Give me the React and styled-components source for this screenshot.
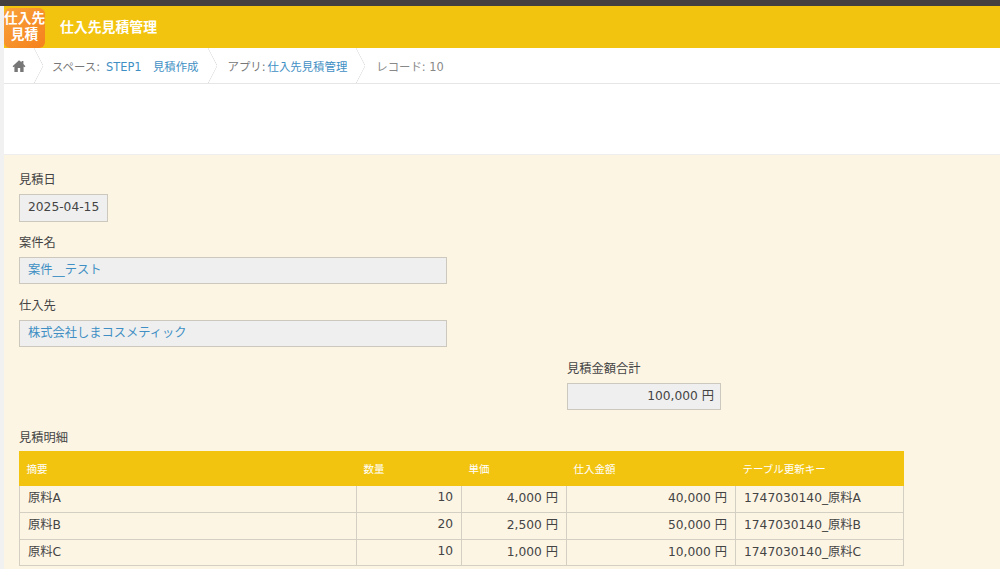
import React from 'react';
import styled, { createGlobalStyle } from 'styled-components';

const rows = [
  { name: '原料A', qty: '10', price: '4,000 円', total: '40,000 円', key: '1747030140_原料A' },
  { name: '原料B', qty: '20', price: '2,500 円', total: '50,000 円', key: '1747030140_原料B' },
  { name: '原料C', qty: '10', price: '1,000 円', total: '10,000 円', key: '1747030140_原料C' },
];

const App = () => {
  return (
    <Page>
      <GlobalStyle />
      <TopBar />
      <Content>
        <Header>
          <AppIcon>
            仕入先
            <br />
            見積
          </AppIcon>
          <AppTitle>仕入先見積管理</AppTitle>
        </Header>
        <Breadcrumb>
          <Crumb $first>
            <svg width="14" height="14" viewBox="0 0 14 14" fill="#777">
              <path d="M7 1.2 0.6 7.2l.9 1L2.4 7.5V13h3.4V9h2.4v4h3.4V7.5l.9.7.9-1L11.4 5V2h-1.8v1.3z" />
            </svg>
          </Crumb>
          <Crumb $gap={6}>
            スペース: <CrumbLink>STEP1　見積作成</CrumbLink>
          </Crumb>
          <Crumb $gap={2}>
            アプリ: <CrumbLink>仕入先見積管理</CrumbLink>
          </Crumb>
          <Crumb $last>レコード: 10</Crumb>
        </Breadcrumb>
        <Toolbar />
        <Form>
          <Field>
            <Label>見積日</Label>
            <Value $width={89} $tall>2025-04-15</Value>
          </Field>
          <Field>
            <Label>案件名</Label>
            <Value $width={428} $link>
              案件__テスト
            </Value>
          </Field>
          <Field>
            <Label>仕入先</Label>
            <Value $width={428} $link>
              株式会社しまコスメティック
            </Value>
          </Field>
          <Field $indent={548}>
            <Label>見積金額合計</Label>
            <Value $width={154} $right>
              100,000 円
            </Value>
          </Field>
          <TableField>
            <Label>見積明細</Label>
            <Table>
              <colgroup>
                <col width="337" />
                <col width="105" />
                <col width="105" />
                <col width="169" />
                <col width="168" />
              </colgroup>
              <thead>
                <tr>
                  <Th>摘要</Th>
                  <Th>数量</Th>
                  <Th>単価</Th>
                  <Th>仕入金額</Th>
                  <Th>テーブル更新キー</Th>
                </tr>
              </thead>
              <tbody>
                {rows.map((row) => (
                  <Row key={row.key}>
                    <Td>{row.name}</Td>
                    <Td $right>{row.qty}</Td>
                    <Td $right>{row.price}</Td>
                    <Td $right>{row.total}</Td>
                    <Td>{row.key}</Td>
                  </Row>
                ))}
              </tbody>
            </Table>
          </TableField>
        </Form>
      </Content>
    </Page>
  );
};

const GlobalStyle = createGlobalStyle`
  html, body {
    margin: 0;
    height: 100%;
    overflow: hidden;
    background: #f1f1f1;
    font-family: "DejaVu Sans", "Noto Sans CJK JP", sans-serif;
    font-size: 12.25px;
    color: #444;
  }
`;

const Page = styled.div`
  display: flex;
  flex-direction: column;
  height: 569px;
  overflow: hidden;
`;

const TopBar = styled.div`
  flex: none;
  height: 6px;
  background: #444040;
`;

const Content = styled.div`
  flex: 1;
  display: flex;
  flex-direction: column;
  min-height: 0;
  margin-left: 4px;
`;

const Header = styled.header`
  flex: none;
  display: flex;
  align-items: flex-end;
  height: 42px;
  background: #f2c40f;
`;

const AppIcon = styled.div`
  width: 41px;
  height: 40px;
  border-radius: 6px;
  background: linear-gradient(135deg, #f9a23a, #f5811d);
  color: #fff;
  font-size: 13.7px;
  font-weight: 700;
  line-height: 16px;
  text-align: center;
  white-space: nowrap;
  padding-top: 2px;
  box-sizing: border-box;
`;

const AppTitle = styled.div`
  margin: 0 0 12px 15px;
  color: #fff;
  font-size: 13.86px;
  font-weight: 700;
  line-height: 18px;
`;

const Breadcrumb = styled.nav`
  flex: none;
  display: flex;
  height: 35px;
  border-bottom: 1px solid #e6e6e6;
  background: #fff;
`;

const Crumb = styled.div`
  position: relative;
  display: flex;
  align-items: center;
  gap: ${(p) => p.$gap || 0}px;
  height: 35px;
  width: ${(p) => (p.$first ? '37px' : 'auto')};
  padding: 0 ${(p) => (p.$first || p.$last ? '0' : '18px')} 0 ${(p) => (p.$first ? '8px' : '0')};
  margin-left: ${(p) => (p.$first ? '0' : '11px')};
  color: ${(p) => (p.$last ? '#888' : '#777')};
  font-size: 11.4px;
  white-space: nowrap;
  box-sizing: border-box;

  &::after {
    content: '';
    display: ${(p) => (p.$last ? 'none' : 'block')};
    position: absolute;
    right: ${(p) => (p.$first ? '-2px' : '0')};
    top: 0;
    width: 9px;
    height: 35px;
    background: linear-gradient(to top right, transparent calc(50% - 0.6px), #dedede 50%, transparent calc(50% + 0.6px)) top / 100% 50% no-repeat,
      linear-gradient(to bottom right, transparent calc(50% - 0.6px), #dedede 50%, transparent calc(50% + 0.6px)) bottom / 100% 50% no-repeat;
  }
`;

const CrumbLink = styled.span`
  color: #3f8fc4;
`;

const Toolbar = styled.div`
  flex: none;
  height: 70px;
  border-bottom: 1px solid #eee;
  background: #fff;
`;

const Form = styled.main`
  flex: 1;
  min-height: 0;
  padding: 17px 15px 0;
  background: #fcf5e4;
`;

const Field = styled.div`
  margin-left: ${(p) => p.$indent || 0}px;
  margin-bottom: 14px;
`;

const TableField = styled.div`
  margin-top: 20px;
`;

const Label = styled.div`
  height: 15px;
  margin-bottom: 7px;
  color: #444;
  font-size: 12.25px;
  line-height: 17px;
`;

const Value = styled.div`
  width: ${(p) => p.$width}px;
  height: ${(p) => (p.$tall ? 28 : 27)}px;
  margin-bottom: ${(p) => (p.$tall ? -1 : 0)}px;
  padding: 0 ${(p) => (p.$right ? 6 : 8)}px 0 8px;
  border: 1px solid #ccc8bd;
  background: #efefef;
  box-sizing: border-box;
  color: ${(p) => (p.$link ? '#3f8fc4' : '#444')};
  font-size: 12.25px;
  line-height: 24px;
  white-space: nowrap;
  text-align: ${(p) => (p.$right ? 'right' : 'left')};
`;

const Table = styled.table`
  width: 884px;
  border-collapse: collapse;
  table-layout: fixed;
  margin-top: -1px;
`;

const Th = styled.th`
  height: 34px;
  padding: 0 6.5px 1px;
  border: 1px solid #f2c40f;
  background: #f2c40f;
  color: #fff;
  font-size: 10.5px;
  font-weight: 400;
  text-align: left;
  box-sizing: border-box;
`;

const Row = styled.tr`
  &:last-child td {
    height: 21px;
  }
`;

const Td = styled.td`
  height: 22px;
  padding: 0 8px 4px;
  border: 1px solid #d3cfc2;
  font-size: 12.25px;
  white-space: nowrap;
  text-align: ${(p) => (p.$right ? 'right' : 'left')};
`;

export default App;
